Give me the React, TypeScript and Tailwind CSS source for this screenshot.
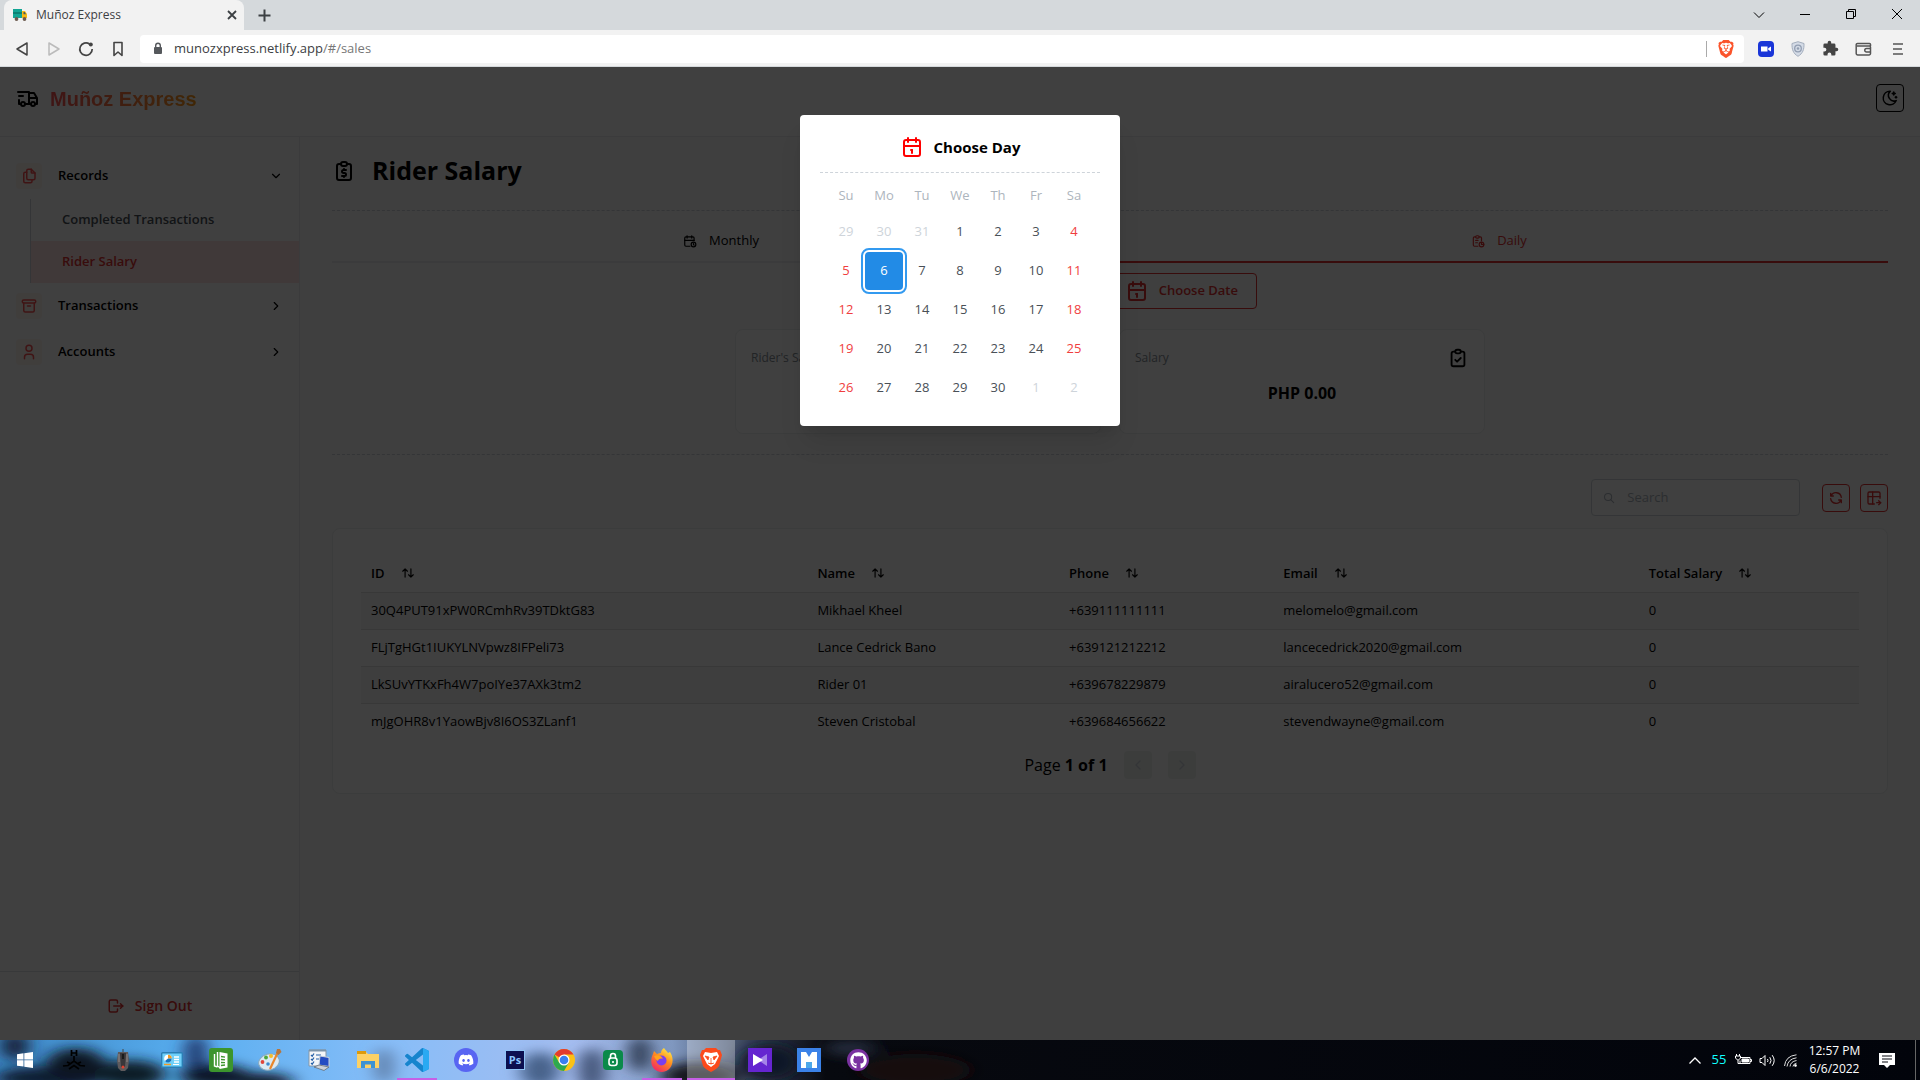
import type { ReactNode } from "react";
import {
  TbArchive, TbArrowsSort, TbCalendar, TbCalendarTime, TbChevronDown, TbChevronLeft, TbChevronRight,
  TbClipboardCheck, TbFiles, TbLogout, TbMoonStars, TbRefresh, TbReport, TbReportMoney, TbSearch,
  TbTableExport, TbTruckDelivery, TbUser,
} from "react-icons/tb";
import { SiBrave } from "react-icons/si";
import { FaDiscord, FaGithub } from "react-icons/fa";

const riders = [
  ["30Q4PUT91xPW0RCmhRv39TDktG83", "Mikhael Kheel", "+639111111111", "melomelo@gmail.com", "0"],
  ["FLjTgHGt1IUKYLNVpwz8IFPeli73", "Lance Cedrick Bano", "+639121212212", "lancecedrick2020@gmail.com", "0"],
  ["LkSUvYTKxFh4W7poIYe37AXk3tm2", "Rider 01", "+639678229879", "airalucero52@gmail.com", "0"],
  ["mJgOHR8v1YaowBjv8I6OS3ZLanf1", "Steven Cristobal", "+639684656622", "stevendwayne@gmail.com", "0"],
];
const columns = [
  { label: "ID", width: "w-[29.8%]" },
  { label: "Name", width: "w-[16.8%]" },
  { label: "Phone", width: "w-[14.3%]" },
  { label: "Email", width: "w-[24.4%]" },
  { label: "Total Salary", width: "w-[14.7%]" },
];
const weeks = [
  [29, 30, 31, 1, 2, 3, 4],
  [5, 6, 7, 8, 9, 10, 11],
  [12, 13, 14, 15, 16, 17, 18],
  [19, 20, 21, 22, 23, 24, 25],
  [26, 27, 28, 29, 30, 1, 2],
];

function BrowserChrome() {
  return (
    <header className="shrink-0 text-[#3c4043]">
      <div className="flex h-[30px] items-stretch bg-[#d5d9dc] pl-1">
        <div className="flex w-60 items-center rounded-t-lg bg-[#f2f2f2] pr-[3px] pl-2">
          <svg width="16" height="16" viewBox="0 0 16 16" aria-hidden="true">
            <path d="M1 2h9v9H1z" fill="#12a594" /><path d="M1 5h9v2H1z" fill="#0b8174" />
            <path d="M10 4h3l2 3v4h-5z" fill="#f5b915" /><path d="M11.500 5h1.300l1.200 2.300h-2.500z" fill="#455a64" />
            <circle cx="4.500" cy="12" r="1.900" fill="#6d5b50" /><circle cx="12.500" cy="12" r="1.900" fill="#6d5b50" />
          </svg>
          <span className="ml-2 flex-1 text-xs">Muñoz Express</span>
          <button aria-label="Close tab" className="p-1">
            <svg width="10" height="10" viewBox="0 0 10 10" stroke="currentColor" strokeWidth="1.800"><path d="M1 1l8 8M9 1l-8 8" /></svg>
          </button>
        </div>
        <button aria-label="New tab" className="ml-3 px-0.5">
          <svg width="13" height="13" viewBox="0 0 13 13" stroke="currentColor" strokeWidth="2"><path d="M6.500 .5v12M.5 6.500h12" /></svg>
        </button>
        <div className="ml-auto flex text-black">
          <WindowButton label="Search tabs"><path d="M1 4.500l5 5 5-5" /></WindowButton>
          <WindowButton label="Minimize"><path d="M1 6.500h10" /></WindowButton>
          <WindowButton label="Restore"><path d="M1.500 3.500h7v7h-7zM3.500 3.500v-2h7v7h-2" /></WindowButton>
          <WindowButton label="Close"><path d="M1 1l10 10M11 1L1 11" /></WindowButton>
        </div>
      </div>
      <div className="flex h-[37px] items-center border-b border-[#d5d9dc] bg-[#f2f2f2] pt-px pr-[14px] pl-[13px]">
        <div className="flex gap-[14px]">
          <button aria-label="Back"><svg width="18" height="18" viewBox="0 0 18 18" fill="none" stroke="#444" strokeWidth="1.500" strokeLinejoin="round"><path d="M14 3v12L4 9z" /></svg></button>
          <button aria-label="Forward"><svg width="18" height="18" viewBox="0 0 18 18" fill="none" stroke="#bbb" strokeWidth="1.500" strokeLinejoin="round"><path d="M4 3v12l10-6z" /></svg></button>
          <button aria-label="Reload"><svg width="18" height="18" viewBox="0 0 18 18" fill="none" stroke="#444" strokeWidth="1.700"><path d="M12.500 4A6.200 6.200 0 1 0 15.200 9" /><circle cx="13.800" cy="4.500" r="2" fill="#444" stroke="none" /></svg></button>
          <button aria-label="Bookmark"><svg width="18" height="18" viewBox="0 0 18 18" fill="none" stroke="#444" strokeWidth="1.600" strokeLinejoin="round"><path d="M5 2.500h8v13L9 12 5 15.500z" /></svg></button>
        </div>
        <div className="ml-[13px] flex h-7 flex-1 items-center rounded-sm bg-white pr-[9px] pl-[13px]">
          <svg width="10" height="14" viewBox="0 0 10 14" aria-hidden="true"><rect x="1" y="5" width="8" height="7" rx="1" fill="#55585c" /><path d="M2.700 5V3.500a2.300 2.300 0 0 1 4.600 0V5" fill="none" stroke="#55585c" strokeWidth="1.400" /></svg>
          <input aria-label="Address" className="sr-only" defaultValue="munozxpress.netlify.app/#/sales" />
          <span className="ml-[11px] flex-1 text-[13px]">munozxpress.netlify.app<span className="text-[#777]">/#/sales</span></span>
          <span className="h-4 w-px bg-[#aaa]" />
          <button aria-label="Brave Shields" className="ml-2.5"><SiBrave size={18} color="#fb542b" /></button>
        </div>
        <div className="ml-[14px] flex items-center gap-4">
          <button aria-label="Zoom"><svg width="16" height="16" viewBox="0 0 16 16"><rect width="16" height="16" rx="4" fill="#1a36d8" /><path d="M3 5.500h6.500v5H3zM10.200 7.200L13 5.500v5l-2.800-1.700z" fill="#fff" /></svg></button>
          <button aria-label="Shield extension"><svg width="16" height="16" viewBox="0 0 16 16"><path d="M8 .7l6 1.800c.2 6-1.200 10-6 12.800C3.200 12.500 1.800 8.500 2 2.500z" fill="#d4dbe6" stroke="#a3adbd" /><circle cx="8" cy="7.500" r="3.300" fill="none" stroke="#929eb2" strokeWidth="1.300" /><circle cx="8" cy="7.500" r="1.300" fill="#929eb2" /></svg></button>
          <button aria-label="Extensions"><svg width="17" height="17" viewBox="0 0 24 24" fill="#444"><path d="M20.500 11H19V7a2 2 0 0 0-2-2h-4V3.500a2.500 2.500 0 0 0-5 0V5H4a2 2 0 0 0-2 2v3.800h1.500a2.700 2.700 0 0 1 0 5.400H2V20a2 2 0 0 0 2 2h3.800v-1.500a2.700 2.700 0 0 1 5.400 0V22H17a2 2 0 0 0 2-2v-4h1.500a2.500 2.500 0 0 0 0-5z" /></svg></button>
          <button aria-label="Wallet"><svg width="17" height="16" viewBox="0 0 17 16" fill="none" stroke="#555" strokeWidth="1.500"><path d="M15.500 5V3.500a1 1 0 0 0-1-1h-12a1.300 1.300 0 0 0-1.300 1.300v8.700a1.500 1.500 0 0 0 1.500 1.500h11.300a1.500 1.500 0 0 0 1.500-1.500V6a1 1 0 0 0-1-1H2" /><path d="M15.500 7.500h-4a1.700 1.700 0 0 0 0 3.500h4" /></svg></button>
          <button aria-label="Menu" className="ml-0.5"><svg width="16" height="14" viewBox="0 0 16 14" stroke="#555" strokeWidth="1.700"><path d="M3 2h10M3 7h9M3 12h10" /></svg></button>
        </div>
      </div>
    </header>
  );
}

function WindowButton({ label, children }: { label: string; children: ReactNode }) {
  return (
    <button aria-label={label} className="flex w-[46px] items-center justify-center pb-0.5">
      <svg width="12" height="12" viewBox="0 0 12 12" fill="none" stroke="currentColor">{children}</svg>
    </button>
  );
}

function NavGroup({ icon, label, open = false }: { icon: ReactNode; label: string; open?: boolean }) {
  return (
    <button className="flex h-[46px] w-full items-center pr-4 pl-4 text-left text-[13px] font-semibold text-black">
      <span className="flex size-[26px] items-center justify-center rounded bg-[#fff5f0] text-[#fa5252]">{icon}</span>
      <span className="ml-4 flex-1">{label}</span>
      {open ? <TbChevronDown size={14} /> : <TbChevronRight size={14} />}
    </button>
  );
}

function Sidebar() {
  return (
    <nav aria-label="Main" className="flex w-[300px] shrink-0 flex-col border-r border-[#e9ecef] bg-white pt-4">
      <NavGroup icon={<TbFiles size={18} />} label="Records" open />
      <div className="ml-[30px] border-l border-[#ced4da] text-[13px] font-semibold">
        <a href="#/completed" className="flex h-[42px] items-center pl-[31px] text-[#495057]">Completed Transactions</a>
        <a href="#/sales" className="flex h-[42px] items-center bg-[#ffe3e3] pl-[31px] text-[#e03131]">Rider Salary</a>
      </div>
      <NavGroup icon={<TbArchive size={18} />} label="Transactions" />
      <NavGroup icon={<TbUser size={18} />} label="Accounts" />
      <button className="mt-auto flex h-[69px] items-center justify-center gap-2.5 border-t border-[#dee2e6] text-sm font-semibold text-[#e03131]">
        <TbLogout size={18} />Sign Out
      </button>
    </nav>
  );
}

function SalaryCard({ title, amount, icon }: { title: string; amount?: string; icon: ReactNode }) {
  return (
    <section className="flex h-[105px] flex-1 flex-col rounded-lg border border-[#eceef0] bg-white px-[15px] pt-[17px]">
      <div className="flex items-center justify-between text-black">
        <h2 className="text-xs text-[#868e96]">{title}</h2>
        {icon}
      </div>
      {amount && <p className="mt-3 text-center text-base font-bold text-black">{amount}</p>}
    </section>
  );
}

function RiderTable() {
  return (
    <section className="mt-3 rounded-lg border border-[#eceef0] bg-white px-7 pt-[26px] pb-[14px] text-black">
      <table className="w-full table-fixed text-left text-[13px]">
        <thead>
          <tr className="h-[37px] border-b border-[#e0e0e0]">
            {columns.map((c) => (
              <th key={c.label} className={`${c.width} pl-2.5 font-semibold`}>
                <button className="flex items-center gap-4">{c.label}<TbArrowsSort size={14} /></button>
              </th>
            ))}
          </tr>
        </thead>
        <tbody>
          {riders.map((row, i) => (
            <tr key={i} className="h-[37px] border-b border-[#e0e0e0] odd:bg-[#f6f6f6] last:border-0">
              {row.map((cell, j) => <td key={j} className="pl-2.5">{cell}</td>)}
            </tr>
          ))}
        </tbody>
      </table>
      <div className="mt-[11px] flex items-center justify-center text-base">
        <span>Page <b>1 of 1</b></span>
        <button aria-label="Previous page" className="ml-4 flex size-7 items-center justify-center rounded bg-[#edf2f0] text-[#ced4da]"><TbChevronLeft size={16} /></button>
        <button aria-label="Next page" className="ml-4 flex size-7 items-center justify-center rounded bg-[#edf2f0] text-[#ced4da]"><TbChevronRight size={16} /></button>
      </div>
    </section>
  );
}

function SalaryPage() {
  return (
    <main className="min-w-0 flex-1 bg-[#f9f9f9] px-8 pt-[14px]">
      <h1 className="flex h-10 items-center gap-4 text-[25px] font-bold text-black"><TbReportMoney size={24} />Rider Salary</h1>
      <hr className="mt-[19px] border-dashed border-[#ced4da]" />
      <div role="tablist" className="mt-2.5 flex h-[42px] text-[13px]">
        <button role="tab" aria-selected="false" className="flex flex-1 items-center justify-center gap-3 border-b-2 border-[#e9ecef] text-black"><TbCalendarTime size={14} />Monthly</button>
        <button role="tab" aria-selected="true" className="flex flex-1 items-center justify-center gap-3 border-b-2 border-[#e03131] text-[#e03131]"><TbReport size={14} />Daily</button>
      </div>
      <div className="mx-auto mt-2.5 flex w-[294px] justify-end">
        <button className="flex h-9 items-center gap-2.5 rounded border border-[#e03131] pr-[18px] pl-4 text-[13px] font-semibold text-[#e03131]"><TbCalendar size={24} />Choose Date</button>
      </div>
      <div className="mx-auto mt-5 flex w-[750px] gap-[18px]">
        <SalaryCard title="Rider's Salary" icon={<TbReportMoney size={22} />} />
        <SalaryCard title="Salary" amount="PHP 0.00" icon={<TbClipboardCheck size={22} />} />
      </div>
      <hr className="mt-5 border-dashed border-[#ced4da]" />
      <div className="mt-6 flex items-center justify-end gap-2.5">
        <label className="mr-3 flex h-[37px] w-[209px] items-center gap-3 rounded border border-[#ced4da] bg-white pl-[11px] text-[#adb5bd]">
          <TbSearch size={14} />
          <input aria-label="Search" placeholder="Search" className="w-full bg-transparent text-[13px] outline-none placeholder:text-[#adb5bd]" />
        </label>
        <button aria-label="Refresh" className="flex size-7 items-center justify-center rounded border border-[#e03131] text-[#e03131]"><TbRefresh size={16} /></button>
        <button aria-label="Export" className="flex size-7 items-center justify-center rounded border border-[#e03131] text-[#e03131]"><TbTableExport size={16} /></button>
      </div>
      <RiderTable />
    </main>
  );
}

function DayPicker() {
  const dayClass = (week: number, col: number, day: number) => {
    if ((week === 0 && day > 7) || (week === 4 && day < 7)) return "block h-[38px] w-full rounded text-[#ced4da]";
    if (week === 1 && day === 6) return "block h-[38px] w-full rounded bg-[#228be6] text-white outline-2 outline-offset-2 outline-[#339af0]";
    if (col === 0 || col === 6) return "block h-[38px] w-full rounded text-[#f03e3e]";
    return "block h-[38px] w-full rounded text-[#495057]";
  };
  return (
    <div role="dialog" aria-label="Choose Day" className="w-80 rounded bg-white px-5 pt-5 pb-[19px] shadow-xl">
      <h2 className="flex h-6 items-center justify-center gap-2.5 text-[15px] font-bold text-black"><TbCalendar size={24} color="#ff0000" />Choose Day</h2>
      <hr className="mt-[13px] border-dashed border-[#ced4da]" />
      <table className="mx-auto mt-[7px] w-[266px] table-fixed text-center text-[13px]">
        <thead>
          <tr className="h-8">
            {["Su", "Mo", "Tu", "We", "Th", "Fr", "Sa"].map((d) => <th key={d} className="font-normal text-[#adb5bd]">{d}</th>)}
          </tr>
        </thead>
        <tbody>
          {weeks.map((week, w) => (
            <tr key={w} className="h-[39px]">
              {week.map((day, c) => <td key={c} className="p-0"><button className={dayClass(w, c, day)}>{day}</button></td>)}
            </tr>
          ))}
        </tbody>
      </table>
    </div>
  );
}

function Wallpaper() {
  return (
    <svg className="absolute inset-0 size-full" viewBox="0 0 1920 40" preserveAspectRatio="none" aria-hidden="true">
      <defs>
        <linearGradient id="sky">
          <stop offset="0" stopColor="#3d86c4" /><stop offset=".1" stopColor="#58aef0" /><stop offset=".2" stopColor="#86bdf8" />
          <stop offset=".3" stopColor="#a5bdf0" /><stop offset=".35" stopColor="#8098c0" /><stop offset=".39" stopColor="#3a455c" /><stop offset=".43" stopColor="#07090f" />
          <stop offset="1" stopColor="#02040b" />
        </linearGradient>
        <filter id="soft" x="-50%" y="-50%" width="200%" height="200%"><feGaussianBlur stdDeviation="9 6" /></filter>
      </defs>
      <rect width="1920" height="40" fill="url(#sky)" />
      <g filter="url(#soft)">
        <ellipse cx="15" cy="6" rx="14" ry="14" fill="#14203a" /><ellipse cx="50" cy="38" rx="55" ry="12" fill="#0e1c30" />
        <ellipse cx="76" cy="24" rx="30" ry="16" fill="#0c1820" /><ellipse cx="130" cy="34" rx="36" ry="14" fill="#0c1a26" />
        <ellipse cx="196" cy="14" rx="12" ry="20" fill="#223a70" /><ellipse cx="215" cy="36" rx="36" ry="12" fill="#0c1626" />
        <ellipse cx="262" cy="42" rx="32" ry="9" fill="#0c1626" /><ellipse cx="384" cy="26" rx="9" ry="18" fill="#5d7ba5" />
        <ellipse cx="540" cy="30" rx="20" ry="18" fill="#47628a" /><ellipse cx="592" cy="30" rx="14" ry="22" fill="#44577a" />
        <ellipse cx="640" cy="14" rx="12" ry="18" fill="#323f58" /><ellipse cx="700" cy="36" rx="40" ry="14" fill="#12161f" />
        <ellipse cx="770" cy="22" rx="30" ry="18" fill="#0e1526" /><ellipse cx="850" cy="8" rx="26" ry="7" fill="#262f40" />
        <ellipse cx="915" cy="30" rx="56" ry="16" fill="#160b0f" />
      </g>
    </svg>
  );
}

function TaskIcon({ label, children, state = "idle" }: { label: string; children: ReactNode; state?: "idle" | "running" | "active" }) {
  const look = {
    idle: "flex h-10 w-12 items-center justify-center",
    running: "flex h-10 w-12 items-center justify-center bg-[linear-gradient(#c65fe6,#c65fe6)] bg-[length:40px_2px] bg-[position:center_bottom] bg-no-repeat",
    active: "flex h-10 w-12 items-center justify-center border-b-2 border-[#c65fe6] bg-white/30 pt-0.5",
  };
  return <button aria-label={label} className={look[state]}>{children}</button>;
}

function Taskbar() {
  return (
    <footer className="relative h-10 shrink-0 overflow-hidden bg-[#02040b] text-white">
      <Wallpaper />
      <div className="relative flex h-full items-center">
        <div className="flex gap-px pl-px">
          <TaskIcon label="Start"><svg width="16" height="16" viewBox="0 0 16 16" fill="#fff"><path d="M0 2.200l6.500-.9v6.200H0zM7.300 1.200L16 0v7.500H7.300zM0 8.300h6.500v6.300L0 13.700zM7.300 8.300H16V16l-8.700-1.200z" /></svg></TaskIcon>
          <TaskIcon label="Launcher"><svg width="24" height="24" viewBox="0 0 24 24" fill="none" stroke="#000" strokeWidth="1.700"><path d="M9.500 2v6M14.500 2v6M9.500 5h5M12 8v5M1 18l5-.5 6-4.500 6 4.500 5 .5M5 14l3 1.500M19 14l-3 1.500M7 21l5-3.500 5 3.500" /></svg></TaskIcon>
          <TaskIcon label="Mouse utility"><svg width="16" height="24" viewBox="0 0 16 24"><path d="M8 1v3" stroke="#444" /><path d="M3 4h10l1 8-1 8-3 3H6l-3-3-1-8z" fill="#5e5a5c" /><path d="M5 5h6l-1 14H6z" fill="#39373a" /><path d="M4 6v8M12 6v8" stroke="#8f8a8a" /><path d="M8 6v5" stroke="#1b1b1b" strokeWidth="2" /><circle cx="8" cy="19" r="1.500" fill="#e0412f" /></svg></TaskIcon>
          <TaskIcon label="Control panel"><svg width="22" height="16" viewBox="0 0 22 16"><rect x=".7" y=".7" width="20.600" height="14.600" rx="1" fill="#6fd0fa" stroke="#2b7fb5" strokeWidth="1.400" /><circle cx="7" cy="6.500" r="3.800" fill="#fff" /><path d="M7 6.500V2.700a3.800 3.800 0 0 1 3.800 3.800z" fill="#f39b22" /><path d="M7 6.500h3.800A3.800 3.800 0 0 1 4 9z" fill="#1674bd" /><path d="M13 5h5M13 7.500h5M13 10h5" stroke="#fff" strokeWidth="1.400" /><path d="M3 12.500h7" stroke="#f39b22" strokeWidth="1.400" /><path d="M12 12.500h6" stroke="#fff" /></svg></TaskIcon>
          <TaskIcon label="Documents"><svg width="24" height="24" viewBox="0 0 24 24"><rect width="24" height="24" rx="3" fill="#3c952d" /><path d="M5.500 6v12l3 1M8.500 4v14l3 2" fill="none" stroke="#fff" strokeWidth="1.400" /><path d="M10.500 4l8 1.500v14l-8 1.500z" fill="#fff" /><path d="M12 8.500l4 .6M12 11.500l4 .4M12 14.500l4 .1M12 17.500l4-.5" stroke="#3c952d" strokeWidth="1.400" /></svg></TaskIcon>
          <TaskIcon label="Paint"><svg width="24" height="24" viewBox="0 0 24 24"><ellipse cx="11" cy="14" rx="10.500" ry="8" fill="#dbe9f3" stroke="#88a8bd" transform="rotate(-15 11 14)" /><circle cx="4.500" cy="14" r="1.900" fill="#e0453b" /><circle cx="8" cy="9.500" r="1.900" fill="#4ba83d" /><circle cx="13" cy="8" r="2" fill="#f4bd2a" /><circle cx="10" cy="16" r="1.800" fill="#3b8bd0" /><path d="M20 4L12 21" stroke="#e8862c" strokeWidth="2.200" /><path d="M18 5l1-4 3 0 1.500 3-3 3z" fill="#b5763e" /></svg></TaskIcon>
          <TaskIcon label="Task list"><svg width="24" height="24" viewBox="0 0 24 24"><path d="M2 2h17v16H2z" fill="#f4f6f9" stroke="#8797a7" /><path d="M2 1.500h17v2H2z" fill="#7c95ab" /><path d="M4 7l1.200 1.200L7 5.500M4 11l1.200 1.200L7 9.500M4 15l1.200 1.200L7 13.500M9 7h5M9 11h3" fill="none" stroke="#2560a8" strokeWidth="1.200" /><path d="M13 8l9 1.500v9L12 17z" fill="#234cc2" stroke="#c9d2dc" /><path d="M7 19l5-2 10 2-5 3.500z" fill="#cbd1d8" stroke="#5c6269" strokeWidth=".7" /></svg></TaskIcon>
          <TaskIcon label="File Explorer"><svg width="22" height="20" viewBox="0 0 22 20"><path d="M0 2h9l2 2h11v14H0z" fill="#fdd165" /><path d="M0 1h9v3H0z" fill="#dd9a0b" /><path d="M4 18v-7h14v7h-4v-3.500H8V18z" fill="#3d92d3" /></svg></TaskIcon>
          <TaskIcon label="Visual Studio Code" state="running"><svg width="24" height="24" viewBox="0 0 24 24"><path fill="#1684cd" d="M23.150 2.587L18.210.21a1.494 1.494 0 0 0-1.705.29l-9.460 8.630-4.120-3.128a.999.999 0 0 0-1.276.057L.327 7.261A1 1 0 0 0 .326 8.740L3.899 12 .326 15.260a1 1 0 0 0 .001 1.479L1.650 17.940a.999.999 0 0 0 1.276.057l4.120-3.128 9.460 8.630a1.492 1.492 0 0 0 1.704.290l4.942-2.377A1.500 1.500 0 0 0 24 20.060V3.939a1.500 1.500 0 0 0-.850-1.352zm-5.146 14.861L10.826 12l7.178-5.448v10.896z" /><path d="M18 0l5.200 2.500q.8.500.8 1.500v16q0 1-.8 1.500L18 24z" fill="#2aa9f2" /></svg></TaskIcon>
          <TaskIcon label="Discord"><span className="flex size-6 items-center justify-center rounded-full bg-[#5865f2]"><FaDiscord size={16} /></span></TaskIcon>
          <TaskIcon label="Photoshop"><span className="flex size-5 items-center justify-center border border-[#8fc4f5] bg-[#0c1050] text-[11px] font-bold text-[#8bc6ff]">Ps</span></TaskIcon>
          <TaskIcon label="Chrome"><svg width="22" height="22" viewBox="0 0 22 22"><circle cx="11" cy="11" r="11" fill="#fbc116" /><path d="M11 11L1.500 5.500A11 11 0 0 1 20.500 5.500H11z" fill="#e33b2e" /><path d="M1.500 5.500A11 11 0 0 0 11 22l4.800-8.200L11 11 6.200 13.700z" fill="#2da94f" /><circle cx="11" cy="11" r="5.500" fill="#fff" /><circle cx="11" cy="11" r="4.300" fill="#3a7ff0" /></svg></TaskIcon>
          <TaskIcon label="Password manager"><svg width="20" height="20" viewBox="0 0 20 20"><rect width="20" height="20" rx="4" fill="#0b8a4a" /><rect x="6" y="8" width="8" height="7.500" rx="2.500" fill="none" stroke="#fff" strokeWidth="1.600" /><path d="M7.500 8V6a2.500 2.500 0 0 1 5 0v2M10 11v2" fill="none" stroke="#fff" strokeWidth="1.600" /></svg></TaskIcon>
          <TaskIcon label="Firefox" state="running"><svg width="24" height="24" viewBox="0 0 24 24"><defs><linearGradient id="fox" x1=".8" y1="0" x2=".2" y2="1"><stop stopColor="#fff04a" /><stop offset=".45" stopColor="#ff8a1e" /><stop offset="1" stopColor="#f0206a" /></linearGradient></defs><path d="M14 0c1 2 3 3 4 5l2-1c5 7 3 19-8 20C2 24-1 14 3 6l1-3 3 3c2-1 3-1 4-1 0-2 1-4 3-5z" fill="url(#fox)" /><circle cx="11.500" cy="12.500" r="5" fill="#7a3ff0" /><path d="M4 8c4-2 8 0 9 3-2-1-5 0-5 2-2-1-3-3-4-5z" fill="#ffa21c" /></svg></TaskIcon>
          <TaskIcon label="Brave" state="active"><svg width="22" height="24" viewBox="0 0 22 24"><path d="M6 0h10l2 2h2l2 5-3 11q-2 3-8 6-6-3-8-6L0 7l2-5h2z" fill="#fb4a1c" /><path d="M5 4l6 1 6-1 2 4-3 6-1 2-4 3-4-3-1-2-3-6z" fill="#fff" /><path d="M5 8l4 1-1 3zM17 8l-4 1 1 3zM11 10v5M8 15l3 1 3-1" stroke="#fb4a1c" fill="#fb4a1c" strokeWidth=".8" /></svg></TaskIcon>
          <TaskIcon label="Media player"><svg width="24" height="24" viewBox="0 0 24 24"><path d="M0 0h24v24H0z" fill="#6525d0" /><path d="M19 6v12l-9-6z" fill="#a583e8" /><path d="M5 6l10 6-10 6z" fill="#fff" /></svg></TaskIcon>
          <TaskIcon label="Mail studio"><svg width="24" height="24" viewBox="0 0 24 24"><path d="M0 0h24v24H0z" fill="#3b82e8" /><path d="M4 20V4h5l3 5 3-5h5v16h-5v-6l-3 3-3-3v6z" fill="#fff" /><path d="M9 14h6v6H9z" fill="#4da8ea" /></svg></TaskIcon>
          <TaskIcon label="GitHub Desktop"><span className="flex size-[22px] items-center justify-center rounded-full bg-[#7a32a0]"><FaGithub size={17} /></span></TaskIcon>
        </div>
        <div className="ml-auto flex h-full items-center">
          <button aria-label="Show hidden icons" className="flex w-6 justify-center"><svg width="12" height="7" viewBox="0 0 12 7" fill="none" stroke="#fff" strokeWidth="1.300"><path d="M.5 6.500L6 1l5.500 5.500" /></svg></button>
          <span className="w-6 text-center text-[13px] text-[#1ff]">55</span>
          <button aria-label="Battery" className="flex w-6 justify-center"><svg width="17" height="12" viewBox="0 0 17 12" fill="none" stroke="#fff"><path d="M6 3.500h9v6H5v-3M15 5.500h1.500v2H15M1.500 0v2M4.500 0v2M.5 2h5v2l-2 2h-1l-2-2zM3 6v3.500h2" /><path d="M7 5h6.500v3H7z" fill="#fff" /></svg></button>
          <button aria-label="Volume" className="flex w-6 justify-center"><svg width="17" height="13" viewBox="0 0 17 13" fill="none" stroke="#fff"><path d="M1 4.500h2L6 1.500v10l-3-3H1zM8.500 5q1 1.500 0 3M10.800 3.200q2.500 3.300 0 6.600M13.200 1.200q4 5.300 0 10.600" /></svg></button>
          <button aria-label="Wi-Fi" className="flex w-6 justify-center"><svg width="14" height="13" viewBox="0 0 14 13" fill="none" stroke="#ddd"><path d="M.5 12Q1.500 2 12.500 .8M3 12.500Q4 5 12.500 3.800M6 12.500Q6.500 7.500 12.500 6.500M9 12.500Q9 10 12.500 9.200" /><circle cx="11.500" cy="11.500" r="1" fill="#fff" /></svg></button>
          <time dateTime="2022-06-06T12:57" className="w-[63px] text-center text-xs leading-[18px]">12:57 PM<br />6/6/2022</time>
          <button aria-label="Notifications" className="flex w-[42px] justify-center"><svg width="16" height="17" viewBox="0 0 16 17"><path d="M0 1h16v12h-5l-3 3-3-3H0z" fill="#fff" /><path d="M3 4h10M3 7h10M3 10h6" stroke="#05070f" strokeWidth="1.200" /></svg></button>
          <span className="mr-1 ml-[7px] h-full w-px bg-[#666]" />
        </div>
      </div>
    </footer>
  );
}

export default function App() {
  return (
    <div className="flex min-h-screen flex-col font-['Open_Sans','Noto_Sans',sans-serif]">
      <BrowserChrome />
      <div className="relative flex flex-1 flex-col">
        <div className="flex h-[70px] shrink-0 items-center border-b border-[#e9ecef] bg-white px-4 pb-2 text-black">
          <div className="flex items-center gap-2.5 pt-0.5">
            <TbTruckDelivery size={24} />
            <span className="bg-gradient-to-r from-[#fa5252] to-[#fd9a14] bg-clip-text font-['Liberation_Sans',sans-serif] text-xl font-bold text-transparent">Muñoz Express</span>
          </div>
          <button aria-label="Toggle dark mode" className="ml-auto flex size-7 items-center justify-center rounded border border-black"><TbMoonStars size={18} /></button>
        </div>
        <div className="flex flex-1">
          <Sidebar />
          <SalaryPage />
        </div>
        <div className="absolute inset-0 flex items-start justify-center bg-black/75 pt-12">
          <DayPicker />
        </div>
      </div>
      <Taskbar />
    </div>
  );
}
